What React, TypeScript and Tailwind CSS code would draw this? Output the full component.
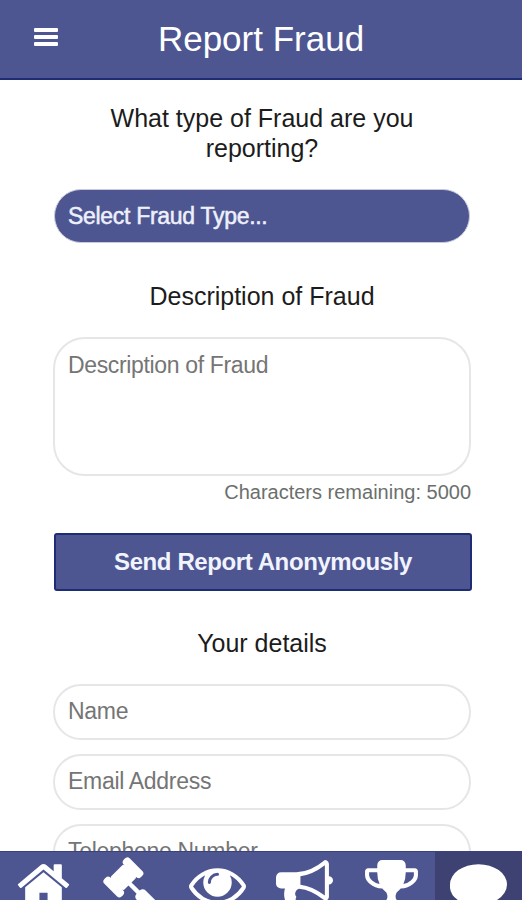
const tabs = [
  {
    name: 'Home',
    path: 'M1472 992v480q0 26-19 45t-45 19h-384v-384h-256v384h-384q-26 0-45-19t-19-45v-480q0-1 .5-3t.5-3l575-474 575 474q1 2 1 6zm223-69l-62 74q-8 9-21 11h-3q-13 0-21-7l-692-577-692 577q-12 8-24 7-13-2-21-11l-62-74q-8-10-7-23.5t11-21.5l719-599q32-26 76-26t76 26l244 204v-195q0-14 9-23t23-9h192q14 0 23 9t9 23v408l219 182q10 8 11 21.5t-7 23.5z',
  },
  {
    name: 'Law',
    path: 'M1771 1536q0 53-37 90l-107 108q-39 37-91 37-53 0-90-37l-363-364q-38-36-38-90 0-53 43-96l-256-256-126 126q-14 14-34 14t-34-14q2 2 12.5 12t12.5 13 10 11.5 10 13.5 6 13.5 5.5 16.5 1.5 18q0 38-28 68-3 3-16.5 18t-19 20.5-18.5 16.5-22 15.5-22 9-26 4.5q-40 0-68-28l-408-408q-28-28-28-68 0-13 4.5-26t9-22 15.5-22 16.5-18.5 20.5-19 18-16.5q30-28 68-28 10 0 18 1.5t16.5 5.5 13.5 6 13.5 10 11.5 10 13 12.5 12 12.5q-14-14-14-34t14-34l348-348q14-14 34-14t34 14q-2-2-12.5-12t-12.5-13-10-11.5-10-13.5-6-13.5-5.5-16.5-1.5-18q0-38 28-68 3-3 16.5-18t19-20.5 18.5-16.5 22-15.5 22-9 26-4.5q40 0 68 28l408 408q28 28 28 68 0 13-4.5 26t-9 22-15.5 22-16.5 18.5-20.5 19-18 16.5q-30 28-68 28-10 0-18-1.5t-16.5-5.5-13.5-6-13.5-10-11.5-10-13-12.5-12-12.5q14 14 14 34t-14 34l-126 126 256 256q43-43 96-43 52 0 91 37l363 363q37 39 37 91z',
  },
  {
    name: 'Watch',
    path: 'M1664 960q-152-236-381-353 61 104 61 225 0 185-131.5 316.5t-316.5 131.5-316.5-131.5-131.5-316.5q0-121 61-225-229 117-381 353 133 205 333.5 326.5t434.5 121.5 434.5-121.5 333.5-326.5zm-720-384q0-20-14-34t-34-14q-125 0-214.5 89.5t-89.5 214.5q0 20 14 34t34 14 34-14 14-34q0-86 61-147t147-61q20 0 34-14t14-34zm848 384q0 34-20 69-140 230-376.5 368.5t-499.5 138.5-499.5-139-376.5-368q-20-35-20-69t20-69q140-229 376.5-368t499.5-139 499.5 139 376.5 368q20 35 20 69z',
  },
  {
    name: 'News',
    path: 'M1664 640q53 0 90.5 37.5t37.5 90.5-37.5 90.5-90.5 37.5v384q0 52-38 90t-90 38q-417-347-812-380-58 19-91 66t-31 100.5 40 92.5q-20 33-23 65.5t6 58 33.5 55 48 50 61.5 50.5q-29 58-111.5 83t-168.5 11.5-132-55.5q-7-23-29.5-87.5t-32-94.5-23-89-15-101 3.5-98.5 22-110.5h-122q-66 0-113-47t-47-113v-192q0-66 47-113t113-47h480q435 0 896-384 52 0 90 38t38 90v384zm-128 604v-954q-394 302-768 343v270q377 42 768 341z',
  },
  {
    name: 'Awards',
    path: 'M522 883q-74-162-74-370h-256v96q0 78 94.5 162t235.5 112zm1078-274v-96h-256q0 208-74 370 141-28 235.5-112t94.5-162zm128-128v128q0 71-41.5 143t-112 130-173 97.5-215.5 44.5q-42 54-95 95-38 34-52.5 72.5t-14.5 89.5q0 54 30.5 91t97.5 37q75 0 133.5 45.5t58.5 114.5v64q0 14-9 23t-23 9h-832q-14 0-23-9t-9-23v-64q0-69 58.5-114.5t133.5-45.5q67 0 97.5-37t30.5-91q0-51-14.5-89.5t-52.5-72.5q-53-41-95-95-113-5-215.5-44.5t-173-97.5-112-130-41.5-143v-128q0-40 28-68t68-28h288v-96q0-66 47-113t113-47h576q66 0 113 47t47 113v96h288q40 0 68 28t28 68z',
  },
  {
    name: 'Report',
    path: 'M0 896a896 640 0 1 1 1792 0 896 640 0 0 1-1041 632q-198 175-460 242-49 14-114 22 110-130 160-350a896 640 0 0 1-337-546z',
    active: true,
  },
];

function Header() {
  return (
    <header className="relative flex h-20 shrink-0 items-center justify-center border-b-2 border-[#1d2c74] bg-[#4d5691] pb-0.5">
      <button aria-label="Menu" className="absolute left-[34px] top-7 flex w-6 flex-col gap-[3px]">
        <span className="h-1 rounded-[1px] bg-white" />
        <span className="h-1 rounded-[1px] bg-white" />
        <span className="h-1 rounded-[1px] bg-white" />
      </button>
      <h1 className="text-[35px] leading-none text-white">Report Fraud</h1>
    </header>
  );
}

function TabBar() {
  return (
    <nav className="grid h-[49px] shrink-0 grid-cols-6 overflow-hidden border-t border-[#39427f] bg-[#4d5691]">
      {tabs.map((tab) => (
        <button
          key={tab.name}
          aria-label={tab.name}
          className={tab.active ? 'flex justify-center bg-[#3d4272] pt-1' : 'flex justify-center pt-1'}
        >
          <svg viewBox="0 0 1792 1792" className="size-[57px] shrink-0 fill-white">
            <path d={tab.path} />
          </svg>
        </button>
      ))}
    </nav>
  );
}

export default function App() {
  const field =
    'block h-14 w-full rounded-full border-2 border-[#e6e6e6] bg-white px-[13px] pb-0.5 text-[23px] tracking-[-0.3px] text-[#757575] placeholder:text-[#757575]';

  return (
    <div className="flex h-[900px] w-[522px] flex-col overflow-hidden bg-white font-['Liberation_Sans',Arial,sans-serif] text-[#1c1c1c]">
      <Header />

      <main className="min-h-0 flex-1 overflow-hidden pl-[53px] pr-[51px] pt-6">
        <h2 className="px-10 text-center text-[25px] leading-[29.5px]">What type of Fraud are you reporting?</h2>
        <button className="mt-[26px] ml-px flex h-[54px] w-[416px] items-center rounded-full border border-[#c9cbdc] bg-[#4d5691] px-[13px] text-[23px] tracking-[-0.3px] text-[#eef0fb] [-webkit-text-stroke:0.5px]">
          Select Fraud Type...
        </button>

        <h2 className="mt-[39px] text-center text-[25px] leading-[29px]">Description of Fraud</h2>
        <textarea
          placeholder="Description of Fraud"
          className="mt-[26px] block h-[139px] w-full resize-none rounded-[32px] border-2 border-[#e6e6e6] px-[13px] py-[13px] text-[23px] leading-[27px] tracking-[-0.35px] placeholder:text-[#757575]"
        />
        <p className="mt-1 text-right text-[20px] leading-6 text-[#6b6f6d]">Characters remaining: 5000</p>

        <button className="ml-px mt-[29px] flex h-[58px] w-full items-center justify-center rounded-[3px] border-2 border-[#1d2c74] bg-[#4d5691] text-[24px] font-bold tracking-[-0.4px] text-[#f1f3ff]">
          Send Report Anonymously
        </button>

        <h2 className="mt-[38px] text-center text-[25px] leading-[29px]">Your details</h2>
        <div className="mt-[26px] flex flex-col gap-3.5">
          <input placeholder="Name" className={field} />
          <input placeholder="Email Address" className={field} />
          <input placeholder="Telephone Number" className={field} />
        </div>
      </main>

      <TabBar />
    </div>
  );
}
